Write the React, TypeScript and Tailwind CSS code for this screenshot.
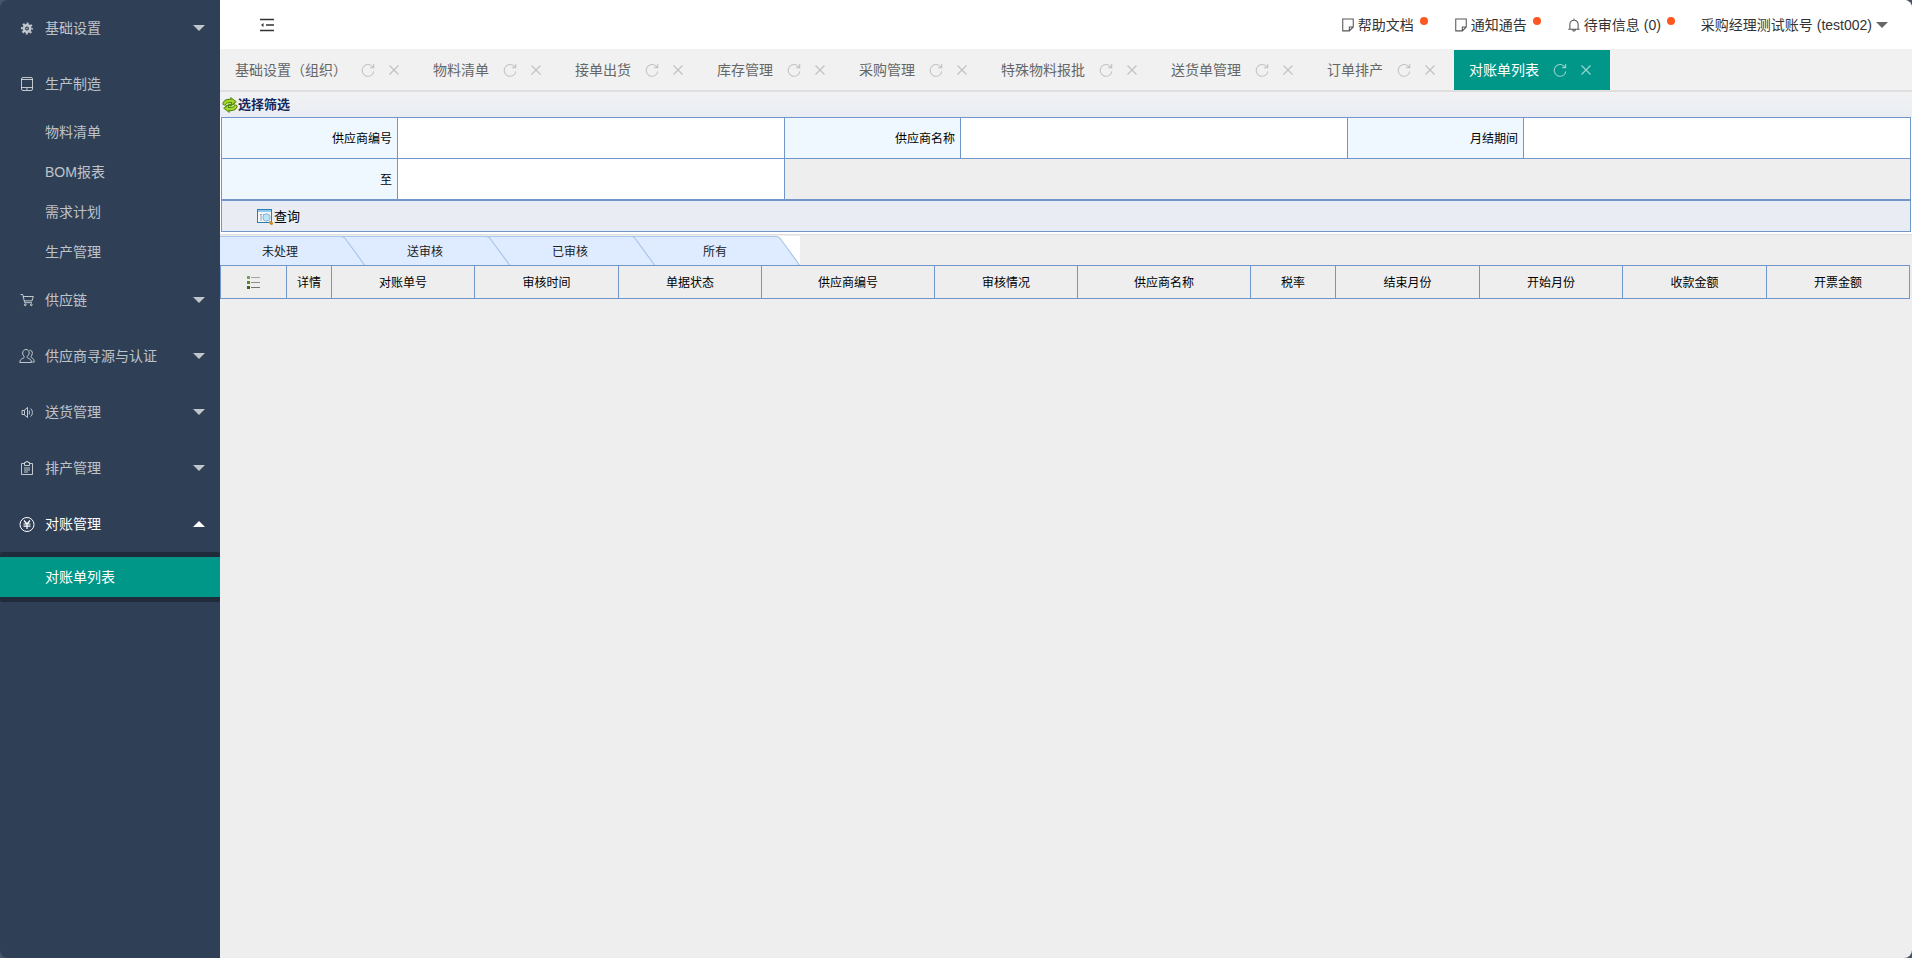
import React from 'react';

interface MenuItem {
  name: string;
  icon: React.ReactNode;
  state: 'closed' | 'open' | 'none';
  children?: string[];
}

const Icon: React.FC<{ children: React.ReactNode; size?: number }> = ({ children, size = 16 }) => (
  <svg width={size} height={size} viewBox="0 0 16 16" fill="none" stroke="currentColor" strokeWidth="1" className="shrink-0" aria-hidden="true">
    {children}
  </svg>
);

const GearIcon = () => (
  <Icon>
    <circle cx="8" cy="8.5" r="3.2" strokeWidth="2.6" />
    <circle cx="8" cy="8.5" r="5.2" strokeWidth="1.8" strokeDasharray="2.04 2.04" strokeDashoffset="1.02" />
    <circle cx="8" cy="8.5" r="0.8" fill="currentColor" stroke="none" />
  </Icon>
);

const PhoneIcon = () => (
  <Icon>
    <rect x="2.5" y="1.5" width="11" height="13" rx="1.5" />
    <path d="M2.5 3.5h11M2.5 11.5h11M7 13h2" />
  </Icon>
);

const CartIcon = () => (
  <Icon>
    <path d="M1.5 2.5h2.2l2 8.2h7.3M4.3 4.5h10L13 8.9H5.4" />
    <circle cx="6.3" cy="12.8" r="0.9" />
    <circle cx="12.3" cy="12.8" r="0.9" />
  </Icon>
);

const UserIcon = () => (
  <Icon>
    <path d="M7 1.5c-2 0-3.3 1.5-3.3 3.5 0 1.7.8 2.7 1.4 3.6.4.8-.2 1.3-1.3 1.8C2 11.200.8 12 .8 14.500h11.700c0-2.500-1.200-3.300-3-4.100-1.100-.5-1.700-1-1.300-1.800.6-.9 2-1.900 2-3.600 0-2-1.200-3.500-3.200-3.500z" />
    <path d="M10.500 2.200c2 0 3 1.300 2.800 3.200-.1 1.500-.8 2.200-1.200 3-.3.8.3 1.200 1.100 1.700 1.300.8 2 1.700 2 4h-2" />
  </Icon>
);

const SpeakerIcon = () => (
  <Icon>
    <path d="M3 6.500h2L8.500 3.500v10L5 10.500H3zM5.500 6.500v4" />
    <path d="M10.300 6.500v4M11.500 4.500c2.500 1.500 2.500 6.500 0 8" />
  </Icon>
);

const ClipboardIcon = () => (
  <Icon>
    <path d="M5.500 3.500h-3v11h11v-11h-3" />
    <path d="M5.500 5.500v-3h1.500v-1h2v1h1.500v3zM5 8h6M5 10h6M5 12h4" />
  </Icon>
);

const YenIcon = () => (
  <Icon>
    <circle cx="8" cy="8.500" r="7" />
    <path d="M5 4.500l3 3.500 3-3.500M4.500 8h7M4.500 10.200h7M8 8v5" strokeWidth="1.200" />
  </Icon>
);

const NoteIcon = () => (
  <Icon size={14}>
    <path d="M2 1.200h12v9l-4.500 4.500H2zM14 10.200H9.500v4.500" stroke="#555" strokeWidth="1.200" />
  </Icon>
);

const BellIcon = () => (
  <Icon size={14}>
    <path d="M8 .5v2M1.500 12.800h13M3.300 12.800V7.200c0-2.800 2-4.700 4.700-4.700s4.700 1.900 4.700 4.700v5.600M6.300 13.200c.2 2.400 3.200 2.400 3.400 0" stroke="#555" strokeWidth="1.200" />
  </Icon>
);

const RefreshIcon = () => (
  <Icon size={14}>
    <path d="M13.800 5A6.700 6.700 0 1 0 14.700 9.500M14.500 1.200v4.300h-4.300" strokeWidth="1.200" />
  </Icon>
);

const CloseIcon = () => (
  <svg width="10" height="10" viewBox="0 0 10 10" stroke="currentColor" strokeWidth="1.200" aria-hidden="true">
    <path d="M.5.500l9 9M9.500.500l-9 9" />
  </svg>
);

const Caret: React.FC<{ up?: boolean }> = ({ up }) => (
  <svg width="12" height="6" viewBox="0 0 12 6" fill="currentColor" className="shrink-0" aria-hidden="true">
    <path d={up ? 'M0 6L6 0l6 6z' : 'M0 0h12L6 6z'} />
  </svg>
);

const RecycleIcon = () => (
  <svg width="16" height="16" viewBox="0 0 16 16" strokeLinejoin="round" strokeLinecap="round" fill="none" aria-hidden="true">
    <path d="M2.500 6.500C3.500 4.300 6 3.500 9 4M7.500 6.500l3.500-.500" stroke="#4f8a10" strokeWidth="4" />
    <path d="M13.500 9.500c-1 2.200-3.500 3-6.500 2.500M8.500 9.500L5 10" stroke="#4f8a10" strokeWidth="4" />
    <path d="M9 .8l5.300 4-4.500 3z" fill="#a6d52a" stroke="#4f8a10" />
    <path d="M7 15.200l-5.300-4 4.500-3z" fill="#a6d52a" stroke="#4f8a10" />
    <path d="M2.500 6.500C3.500 4.300 6 3.500 10 4" stroke="#a6d52a" strokeWidth="2.200" />
    <path d="M13.500 9.500c-1 2.200-3.500 3-7.500 2.500" stroke="#a6d52a" strokeWidth="2.200" />
    <path d="M5 7.300c1-.8 2-.9 3.500-.7M11 8.700c-1 .8-2 .9-3.500.7" stroke="#d9ef8a" />
  </svg>
);

const SearchWindowIcon = () => (
  <svg width="16" height="16" viewBox="0 0 16 16" fill="none" aria-hidden="true">
    <rect x="0.500" y="0.500" width="14" height="13" fill="#f4f8fb" stroke="#2b7fae" />
    <path d="M1 2h13" stroke="#8cc9ec" strokeWidth="2" />
    <path d="M3 5.500h5M3 7h3M3 9h2M3 11h3" stroke="#9aa3aa" strokeDasharray="2 1" />
    <path d="M13.500 13.500l1 1" stroke="#d08a2c" strokeWidth="3" strokeLinecap="round" />
    <circle cx="9.500" cy="8.500" r="3.700" fill="#b9e3f8" stroke="#8fb3c8" />
  </svg>
);

const ListIcon = () => (
  <svg width="14" height="14" viewBox="0 0 14 14" aria-hidden="true">
    <path d="M0 0h3v3H0z" fill="#7aa353" />
    <path d="M0 5h3v3H0z" fill="#5a8536" />
    <path d="M0 10h3v3H0z" fill="#3c6414" />
    <path d="M4 1h9v1H4z" fill="#a5a5a5" />
    <path d="M4 6h9v1H4z" fill="#8c8c8c" />
    <path d="M4 11h9v1H4z" fill="#757575" />
  </svg>
);

const menu: MenuItem[] = [
  { name: '基础设置', icon: <GearIcon />, state: 'closed' },
  { name: '生产制造', icon: <PhoneIcon />, state: 'none', children: ['物料清单', 'BOM报表', '需求计划', '生产管理'] },
  { name: '供应链', icon: <CartIcon />, state: 'closed' },
  { name: '供应商寻源与认证', icon: <UserIcon />, state: 'closed' },
  { name: '送货管理', icon: <SpeakerIcon />, state: 'closed' },
  { name: '排产管理', icon: <ClipboardIcon />, state: 'closed' },
  { name: '对账管理', icon: <YenIcon />, state: 'open' },
];

const pageTabs = ['基础设置（组织）', '物料清单', '接单出货', '库存管理', '采购管理', '特殊物料报批', '送货单管理', '订单排产', '对账单列表'];

const notices = [
  { name: '帮助文档', icon: <NoteIcon /> },
  { name: '通知通告', icon: <NoteIcon /> },
  { name: '待审信息 (0)', icon: <BellIcon /> },
];

const statusTabs = ['未处理', '送审核', '已审核', '所有'];

const columns = [
  { name: '详情', width: 45 },
  { name: '对账单号', width: 143 },
  { name: '审核时间', width: 144 },
  { name: '单据状态', width: 143 },
  { name: '供应商编号', width: 173 },
  { name: '审核情况', width: 143 },
  { name: '供应商名称', width: 173 },
  { name: '税率', width: 85 },
  { name: '结束月份', width: 144 },
  { name: '开始月份', width: 143 },
  { name: '收款金额', width: 144 },
  { name: '开票金额', width: 143 },
];

const Sidebar: React.FC = () => (
  <nav className="w-[220px] shrink-0 bg-[#2f4056] text-sm text-white/70">
    {menu.map(item => (
      <div key={item.name}>
        <a href="#" className={`flex h-14 items-center pr-[15px] pl-[19px] ${item.state === 'open' ? 'text-white' : ''}`}>
          {item.icon}
          <span className="ml-[10px] grow">{item.name}</span>
          {item.state !== 'none' && <Caret up={item.state === 'open'} />}
        </a>
        {item.children?.map(child => (
          <a key={child} href="#" className="flex h-10 items-center pl-[45px]">{child}</a>
        ))}
      </div>
    ))}
    <div className="rounded-xs bg-[#202c3c] py-[5px]">
      <a href="#" className="flex h-10 items-center bg-[#009688] pl-[45px] text-white">对账单列表</a>
    </div>
  </nav>
);

const Header: React.FC = () => (
  <header className="flex h-[50px] items-center border-b border-[#f2f2f2] bg-white pr-6 pl-10 text-sm text-[#333]">
    <button type="button" aria-label="收起菜单">
      <svg width="14" height="14" viewBox="0 0 14 14" stroke="#333" strokeWidth="1.300" aria-hidden="true">
        <path d="M0 1.500h14M6 7h8M0 12.500h14" />
        <path d="M1 7l2.500-2v4z" fill="#333" stroke="none" />
      </svg>
    </button>
    <div className="ml-auto flex items-center">
      {notices.map(notice => (
        <a key={notice.name} href="#" className="mr-[26px] flex items-center">
          {notice.icon}
          <span className="ml-[3px]">{notice.name}</span>
          <span className="mb-2 ml-[6px] size-2 rounded-full bg-[#ff5722]" />
        </a>
      ))}
      <button type="button" className="flex items-center gap-1">
        采购经理测试账号 (test002)
        <span className="text-[#666]"><Caret /></span>
      </button>
    </div>
  </header>
);

const PageTabs: React.FC = () => (
  <div className="flex h-10 bg-[#f1f1f1] text-sm">
    {pageTabs.map((name, i) => {
      const active = i === pageTabs.length - 1;
      return (
        <div key={name} className={`flex items-center pr-[19px] pl-[15px] ${active ? 'bg-[#009688] text-white' : 'text-[#666]'}`}>
          <a href="#" className="whitespace-nowrap">{name}</a>
          <button type="button" aria-label="刷新" className={`ml-[14px] ${active ? 'text-white/60' : 'text-[#c2c2c2]'}`}><RefreshIcon /></button>
          <button type="button" aria-label="关闭" className={`ml-[14px] ${active ? 'text-white/60' : 'text-[#c2c2c2]'}`}><CloseIcon /></button>
        </div>
      );
    })}
  </div>
);

const FilterField: React.FC<{ id: string; label: string }> = ({ id, label }) => (
  <>
    <td className="border border-[#7096ca] bg-[#eff8ff] pt-[2px] pr-[5px] text-right">
      <label htmlFor={id}>{label}</label>
    </td>
    <td className="border border-[#7096ca] bg-white p-0">
      <input id={id} type="text" className="block h-10 w-full bg-white px-1 outline-none" />
    </td>
  </>
);

const FilterPanel: React.FC = () => (
  <form className="border-t-2 border-b border-[#dfdfdf] bg-white pb-[2px]" onSubmit={e => e.preventDefault()}>
    <div className="flex h-[25px] items-center bg-linear-to-b from-[#f2f2f4] to-[#e9edf3] pl-[2px] font-bold text-[#15275c]">
      <RecycleIcon />
      <h2 className="text-[13px]">选择筛选</h2>
    </div>
    <div className="mr-px ml-px">
      <table className="w-full table-fixed border-collapse bg-[#eee]">
        <colgroup>
          <col className="w-[176px]" />
          <col className="w-[387px]" />
          <col className="w-[176px]" />
          <col className="w-[387px]" />
          <col className="w-[176px]" />
          <col className="w-[387px]" />
        </colgroup>
        <tbody>
          <tr className="h-[41px]">
            <FilterField id="supplier-no" label="供应商编号" />
            <FilterField id="supplier-name" label="供应商名称" />
            <FilterField id="period-from" label="月结期间" />
          </tr>
          <tr className="h-[41px]">
            <FilterField id="period-to" label="至" />
            <td colSpan={4} className="border border-[#7096ca]" />
          </tr>
        </tbody>
      </table>
      <div className="flex h-8 items-center border border-[#7096ca] bg-[#e9edf3] pt-[2px] pl-[35px]">
        <button type="submit" className="flex items-center gap-px text-[13px]">
          <SearchWindowIcon />
          查询
        </button>
      </div>
    </div>
  </form>
);

const StatusTabs: React.FC = () => (
  <div className="mt-px flex h-[29px]">
    {statusTabs.map((name, i) => (
      <button key={name} type="button" className="flex w-[145px] bg-[#dfecff] text-[#222]">
        <span className="flex h-full w-[120px] items-center justify-center border-t border-[#a9c6ec] pt-px">{name}</span>
        <svg width="25" height="29" viewBox="0 0 25 29" aria-hidden="true">
          {i === statusTabs.length - 1 ? (
            <path d="M0 0h25v29L7 5C5 2 4 .5 0 .5z" fill="#fff" />
          ) : (
            <path d="M0 .5h25" stroke="#a9c6ec" />
          )}
          <path d="M0 .5c4 0 5 1.500 7 4.500L24.500 29" fill="none" stroke="#a9c6ec" strokeWidth="1.200" />
        </svg>
      </button>
    ))}
  </div>
);

const ResultTable: React.FC = () => (
  <div className="mr-[2px]">
    <table className="w-full table-fixed border-collapse">
      <colgroup>
        <col style={{ width: 66 }} />
        {columns.map(col => (
          <col key={col.name} style={{ width: col.width }} />
        ))}
      </colgroup>
      <thead>
        <tr className="h-[33px]">
          <th className="border border-[#7096ca] px-0 pt-[2px] pb-0" aria-label="选择列">
            <div className="flex justify-center"><ListIcon /></div>
          </th>
          {columns.map(col => (
            <th key={col.name} className="border border-[#7096ca] px-0 pt-[2px] pb-0 text-center font-normal">{col.name}</th>
          ))}
        </tr>
      </thead>
    </table>
  </div>
);

const App: React.FC = () => (
  <div className="bg-[#475569] font-['Liberation_Sans','Noto_Sans_CJK_SC',sans-serif]">
    <div className="flex min-h-screen overflow-hidden rounded-lg">
      <Sidebar />
      <div className="min-w-0 grow bg-[#eee]">
        <Header />
        <PageTabs />
        <main className="text-xs text-black">
          <FilterPanel />
          <StatusTabs />
          <ResultTable />
        </main>
      </div>
    </div>
  </div>
);

export default App;
